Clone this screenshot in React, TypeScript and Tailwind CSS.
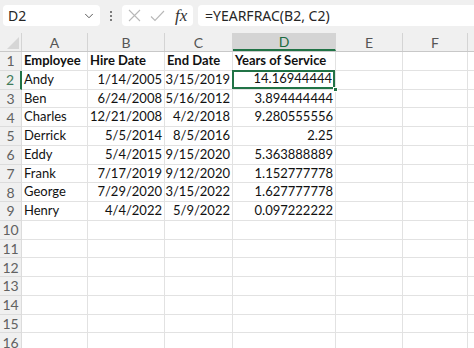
import { ChevronDown } from "lucide-react";

const cols = [
  { key: "A", w: "w-[66px]" },
  { key: "B", w: "w-[77px]" },
  { key: "C", w: "w-[68px]" },
  { key: "D", w: "w-[103px]" },
  { key: "E", w: "w-[67px]" },
  { key: "F", w: "w-[65px]" },
  { key: "", w: "w-[40px]" },
];

const data: string[][] = [
  ["Andy", "1/14/2005", "3/15/2019", "14.16944444"],
  ["Ben", "6/24/2008", "5/16/2012", "3.894444444"],
  ["Charles", "12/21/2008", "4/2/2018", "9.280555556"],
  ["Derrick", "5/5/2014", "8/5/2016", "2.25"],
  ["Eddy", "5/4/2015", "9/15/2020", "5.363888889"],
  ["Frank", "7/17/2019", "9/12/2020", "1.152777778"],
  ["George", "7/29/2020", "3/15/2022", "1.627777778"],
  ["Henry", "4/4/2022", "5/9/2022", "0.097222222"],
];

const header = ["Employee", "Hire Date", "End Date", "Years of Service"];

function Cell({ w, children, align = "left", bold = false }: { w: string; children?: React.ReactNode; align?: "left" | "right"; bold?: boolean }) {
  return (
    <div
      className={`${w} shrink-0 h-full border-r border-b border-[#e2e2e2] flex items-center overflow-hidden whitespace-nowrap ${
        align === "right" ? "justify-end pr-[2px]" : "pl-[2px]"
      } ${bold ? "font-bold" : ""}`}
    >
      {children}
    </div>
  );
}

export default function App() {
  const rows = Array.from({ length: 16 }, (_, i) => i + 1);

  return (
    <div className="w-[474px] h-[348px] overflow-hidden bg-white font-['Lato',sans-serif] text-[13px] text-[#111]">
      {/* Formula bar */}
      <div className="h-[33px] bg-[#f0f0f0] flex items-start pt-[5px] pl-[3px]">
        <div className="w-[97px] h-[21px] bg-white rounded-[4px] flex items-center justify-between pl-[5px] pr-[4px]">
          <span className="text-[14px] text-[#262626] font-['Noto_Sans',sans-serif]">D2</span>
          <ChevronDown className="w-[14px] h-[14px] text-[#444]" strokeWidth={1.5} />
        </div>
        <div className="w-[22px] h-[21px] flex items-center justify-center">
          <div className="flex flex-col gap-[2px]">
            <span className="w-[2px] h-[2px] bg-[#555] rounded-full" />
            <span className="w-[2px] h-[2px] bg-[#555] rounded-full" />
            <span className="w-[2px] h-[2px] bg-[#555] rounded-full" />
          </div>
        </div>
        <div className="w-[71px] h-[21px] bg-white rounded-[4px] flex items-center pl-[6px]">
          <svg width="13" height="13" viewBox="0 0 13 13" className="shrink-0">
            <path d="M1 1 L12 12 M12 1 L1 12" stroke="#b8b8b8" strokeWidth="1.1" fill="none" />
          </svg>
          <svg width="15" height="12" viewBox="0 0 15 12" className="ml-[9px] shrink-0">
            <path d="M1 6.5 L5 10.5 L14 1" stroke="#b8b8b8" strokeWidth="1.1" fill="none" />
          </svg>
          <span className="ml-[10px] font-['Liberation_Serif',serif] italic text-[17px] text-[#333] leading-none">fx</span>
        </div>
        <div className="ml-[5px] flex-1 h-[21px] bg-white rounded-l-[4px] flex items-center pl-[7px]">
          <span className="text-[14px] text-[#262626] font-['Noto_Sans',sans-serif]">=YEARFRAC(B2, C2)</span>
        </div>
      </div>

      {/* Column headers */}
      <div className="h-[19px] flex bg-[#f0f0f0] border-b border-[#c8c8c8]">
        <div className="w-[22px] shrink-0 h-full border-r border-[#d4d4d4] flex items-end justify-end p-[2px]">
          <svg width="12" height="12" viewBox="0 0 12 12">
            <polygon points="12,0 12,12 0,12" fill="#d6d6d6" />
          </svg>
        </div>
        {cols.map((c, i) => (
          <div
            key={i}
            className={`${c.w} shrink-0 h-full flex items-center justify-center border-r border-[#d4d4d4] text-[14px] ${
              c.key === "D" ? "bg-[#d4d4d4] text-[#1b6b40] border-b-2 border-b-[#217346]" : "text-[#555]"
            }`}
          >
            {c.key}
          </div>
        ))}
      </div>

      {/* Rows */}
      {rows.map((r) => {
        const values = r === 1 ? header : data[r - 2] || [];
        return (
          <div key={r} className="h-[18.75px] flex">
            <div
              className={`w-[22px] shrink-0 h-full flex items-center justify-center text-[14px] bg-[#f0f0f0] border-b border-[#dcdcdc] ${
                r === 2 ? "text-[#3f7a5a] border-r-2 border-r-[#217346] bg-[#e4e4e4]" : "text-[#616161] border-r border-[#d0d0d0]"
              }`}
            >
              {r}
            </div>
            {cols.map((c, ci) => {
              const v = values[ci];
              const right = r > 1 && ci > 0 && ci < 4;
              if (r === 2 && c.key === "D") {
                return (
                  <div key={ci} className={`${c.w} shrink-0 h-full relative border-b border-r border-[#e2e2e2]`}>
                    <div className="absolute -left-[1px] -top-[1px] right-0 bottom-0 border-2 border-[#217346] flex items-center justify-end pr-[1px]">
                      {v}
                    </div>
                    <div className="absolute -right-[3px] -bottom-[3px] w-[5px] h-[5px] bg-[#217346] border border-white" />
                  </div>
                );
              }
              return (
                <Cell key={ci} w={c.w} align={right ? "right" : "left"} bold={r === 1}>
                  {v}
                </Cell>
              );
            })}
          </div>
        );
      })}
    </div>
  );
}
